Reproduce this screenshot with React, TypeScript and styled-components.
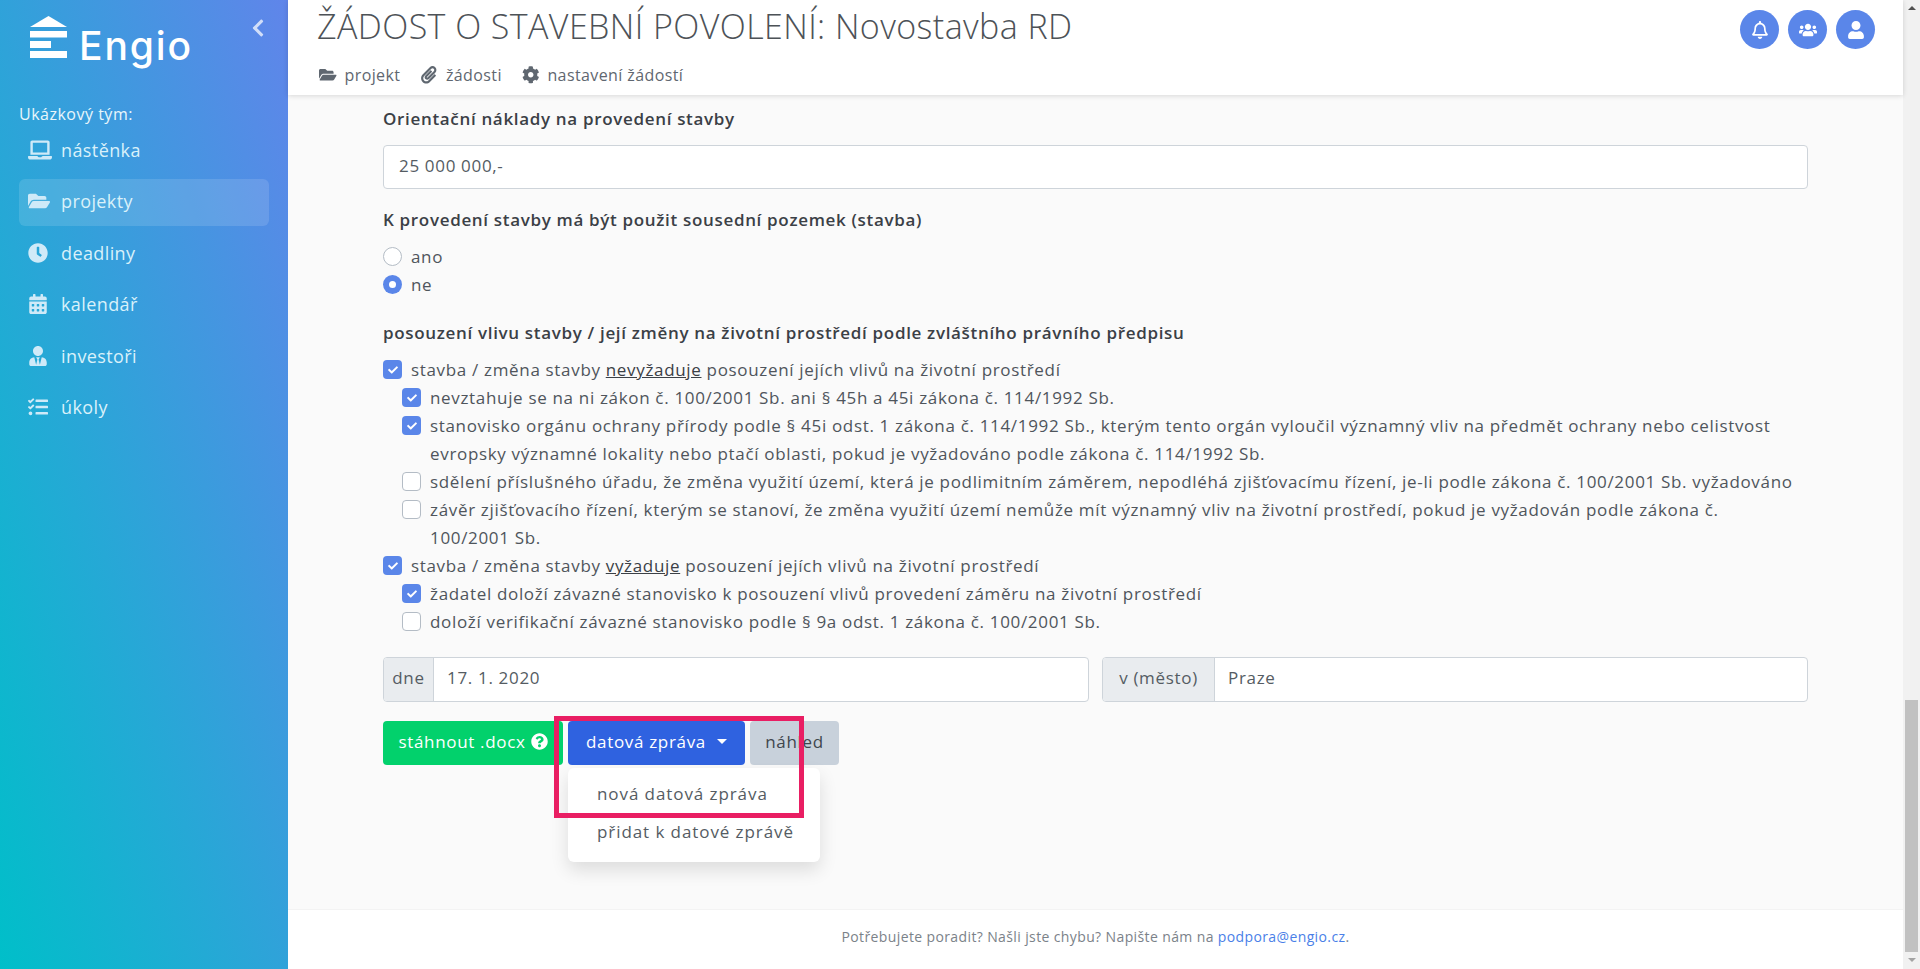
import React from "react";
import styled, { createGlobalStyle } from "styled-components";
import { FaLaptop, FaFolderOpen, FaClock, FaCalendarAlt, FaUserTie, FaTasks, FaPaperclip, FaCog, FaRegBell, FaUsers, FaUser, FaQuestionCircle, FaCheck, FaChevronLeft } from "react-icons/fa";

const Global = createGlobalStyle`
  html, body { margin: 0; padding: 0; height: 100%; overflow: hidden; }
  body { font-family: "Open Sans", "Lato", sans-serif; font-size: 17px; font-weight: 400; color: #4f555c; letter-spacing: 0.67px; }
  * { box-sizing: border-box; }
`;

const Page = styled.div`display: flex; width: 1920px; height: 969px; background: #fafafa;`;
const Sidebar = styled.aside`
  width: 288px; flex: none; padding: 16px 19px 0; color: #fff;
  background: linear-gradient(to top right, #00bfc9, #6085ea);
  display: flex; flex-direction: column;
`;
const Brand = styled.div`display: flex; align-items: flex-start; height: 88px; position: relative; padding-left: 11px;`;
const BrandName = styled.span`
  font-family: "Inter", sans-serif; font-size: 39px; font-weight: 500; letter-spacing: 1.9px; line-height: 46px; margin: 7px 0 0 12px;
`;
const Collapse = styled.span`position: absolute; left: 229px; top: 2px; color: rgba(255,255,255,.72); font-size: 20px; display: flex;`;
const TeamLabel = styled.div`height: 20px; line-height: 20px; font-size: 16px; color: #e8f6fb; margin-bottom: 4px; letter-spacing: .5px;`;
const NavItem = styled.div<{ $active?: boolean }>`
  height: 47px; margin-bottom: 4.4px; padding: 0 0 3px 9px; display: flex; align-items: center;
  border-radius: 6px; font-size: 18px; color: #d9f1fa; letter-spacing: .4px;
  background: ${p => (p.$active ? "rgba(255,255,255,.13)" : "transparent")};
`;
const NavIcon = styled.span<{ $size: number }>`width: 33px; flex: none; display: flex; font-size: ${p => p.$size}px; color: #cfeaf8;`;

const Right = styled.div`flex: 1; min-width: 0; display: flex; flex-direction: column;`;
const Header = styled.header`
  height: 95px; flex: none; background: #fff; box-shadow: 0 1px 5px rgba(0,0,0,.14); padding: 0 28px 0 29px;
  display: flex; justify-content: space-between; position: relative; z-index: 2;
`;
const Title = styled.h1`margin: 8px 0 0; font-size: 34px; line-height: 37px; font-weight: 300; color: #4d5257; letter-spacing: .42px; white-space: nowrap;`;
const Tabs = styled.nav`display: flex; gap: 20px; margin-top: 18px; padding-left: 2px;`;
const Tab = styled.span`
  display: flex; align-items: center; gap: 8px; height: 24px; color: #5f6770; font-size: 16px; letter-spacing: .4px;
  svg { font-size: 17.5px; }
`;
const Circles = styled.div`display: flex; gap: 9px; padding-top: 10px;`;
const Circle = styled.span`width: 39px; height: 39px; border-radius: 50%; background: #5a86e9; color: #fff; display: flex; align-items: center; justify-content: center; font-size: 18px;`;

const Main = styled.main`flex: 1; padding: 12px 95px 0; overflow: hidden;`;
const FieldLabel = styled.div<{ $top?: number }>`height: 24px; line-height: 24px; font-weight: 600; color: #3b4046; margin-top: ${p => p.$top ?? 0}px; white-space: nowrap;`;
const Input = styled.div`
  height: 44px; margin-top: 14px; background: #fff; border: 1px solid #ced4da; border-radius: 4px;
  padding: 0 15px 3px; display: flex; align-items: center; color: #555c63;
`;
const Group = styled.div<{ $top: number }>`margin-top: ${p => p.$top}px;`;
const Row = styled.div<{ $level?: number }>`
  display: flex; align-items: flex-start; gap: 9px; line-height: 28px; white-space: nowrap; padding-left: ${p => (p.$level ?? 0) * 19}px;
`;
const Box = styled.span<{ $on?: boolean; $round?: boolean }>`
  width: 19px; height: 19px; flex: none; margin-top: 4px; display: flex; align-items: center; justify-content: center;
  border-radius: ${p => (p.$round ? "50%" : "4px")}; color: #fff; font-size: 10px;
  background: ${p => (p.$on ? "#5a86e9" : "#fff")};
  border: ${p => (p.$on ? "none" : "1px solid #b4bcc5")};
`;
const Dot = styled.span`width: 7px; height: 7px; border-radius: 50%; background: #fff;`;
const Under = styled.u`color: #3b4046;`;
const Pair = styled.div`display: flex; gap: 13px; margin-top: 21px;`;
const InputGroup = styled.div`flex: 1; height: 45px; display: flex; border: 1px solid #ced4da; border-radius: 4px; overflow: hidden; background: #fff;`;
const Addon = styled.span<{ $w: number }>`
  width: ${p => p.$w}px; flex: none; background: #e9ecef; border-right: 1px solid #ced4da; padding-bottom: 4px;
  display: flex; align-items: center; justify-content: center; color: #555c63; white-space: nowrap;
`;
const GroupValue = styled.span`padding: 0 13px 4px; display: flex; align-items: center; color: #555c63;`;
const Actions = styled.div`display: flex; gap: 5px; margin-top: 19px; position: relative; width: 460px;`;
const Btn = styled.span<{ $bg: string; $fg: string; $w: number }>`
  width: ${p => p.$w}px; height: 44px; padding-bottom: 4px; border-radius: 4px; background: ${p => p.$bg}; color: ${p => p.$fg};
  display: flex; align-items: center; justify-content: center; gap: 5px; white-space: nowrap;
  svg { font-size: 17px; flex: none; }
`;
const Caret = styled.span`width: 0; height: 0; margin-left: 6px; border-left: 5px solid transparent; border-right: 5px solid transparent; border-top: 5px solid #fff;`;
const Menu = styled.div`
  position: absolute; left: 185px; top: 47px; width: 252px; height: 94px; background: #fff; border-radius: 6px;
  box-shadow: 0 8px 18px rgba(0,0,0,.12); padding: 7px 0; z-index: 3;
`;
const MenuItem = styled.div`height: 38px; line-height: 38px; padding-left: 29px; color: #555c63; white-space: nowrap; letter-spacing: .92px;`;
const Highlight = styled.div`position: absolute; left: 171px; top: -5px; width: 250px; height: 102px; border: 5px solid #e91e63; z-index: 4;`;
const Footer = styled.footer`
  height: 60px; flex: none; background: #fff; border-top: 1px solid #f3f3f3; display: flex; align-items: center; justify-content: center;
  font-size: 14px; color: #7b8289; letter-spacing: .38px; padding-bottom: 6px;
`;
const Link = styled.span`color: #4a7fe8; margin-left: 4px;`;
const Scroll = styled.div`width: 17px; flex: none; background: #f1f1f1; position: relative;`;
const Thumb = styled.div`position: absolute; left: 2px; width: 13px; top: 700px; height: 252px; background: #c1c1c1;`;
const ArrowUp = styled.div`position: absolute; left: 5px; top: 6px; border-left: 4px solid transparent; border-right: 4px solid transparent; border-bottom: 4px solid #505050;`;
const ArrowDown = styled.div`position: absolute; left: 5px; top: 958px; border-left: 4px solid transparent; border-right: 4px solid transparent; border-top: 4px solid #a3a3a3;`;

const Logo = () => (
  <svg width="37" height="42" viewBox="0 0 37 42" fill="#fff">
    <polygon points="18.5,0 37,11 0,11" />
    <rect x="0" y="15" width="37" height="6.5" />
    <rect x="0" y="25" width="21" height="7" />
    <rect x="0" y="35" width="37" height="7" />
  </svg>
);

const Check = ({ on }: { on?: boolean }) => <Box $on={on}>{on && <FaCheck />}</Box>;

const nav = [
  { t: "nástěnka", i: <FaLaptop />, s: 24 },
  { t: "projekty", i: <FaFolderOpen />, s: 22, a: true },
  { t: "deadliny", i: <FaClock />, s: 20 },
  { t: "kalendář", i: <FaCalendarAlt />, s: 20 },
  { t: "investoři", i: <FaUserTie />, s: 20 },
  { t: "úkoly", i: <FaTasks />, s: 20 },
];

export default function App() {
  return (
    <Page>
      <Global />
      <Sidebar>
        <Brand>
          <Logo />
          <BrandName>Engio</BrandName>
          <Collapse><FaChevronLeft /></Collapse>
        </Brand>
        <TeamLabel>Ukázkový tým:</TeamLabel>
        {nav.map(n => (
          <NavItem key={n.t} $active={n.a}>
            <NavIcon $size={n.s}>{n.i}</NavIcon>
            {n.t}
          </NavItem>
        ))}
      </Sidebar>
      <Right>
        <Header>
          <div>
            <Title>ŽÁDOST O STAVEBNÍ POVOLENÍ: Novostavba RD</Title>
            <Tabs>
              <Tab><FaFolderOpen />projekt</Tab>
              <Tab><FaPaperclip />žádosti</Tab>
              <Tab><FaCog />nastavení žádostí</Tab>
            </Tabs>
          </div>
          <Circles>
            <Circle><FaRegBell /></Circle>
            <Circle><FaUsers /></Circle>
            <Circle><FaUser /></Circle>
          </Circles>
        </Header>
        <Main>
          <FieldLabel>Orientační náklady na provedení stavby</FieldLabel>
          <Input>25 000 000,-</Input>
          <FieldLabel $top={19}>K provedení stavby má být použit sousední pozemek (stavba)</FieldLabel>
          <Group $top={11}>
            <Row><Box $round />ano</Row>
            <Row><Box $round $on><Dot /></Box>ne</Row>
          </Group>
          <FieldLabel $top={22}>posouzení vlivu stavby / její změny na životní prostředí podle zvláštního právního předpisu</FieldLabel>
          <Group $top={11}>
            <Row><Check on /><span>stavba / změna stavby <Under>nevyžaduje</Under> posouzení jejích vlivů na životní prostředí</span></Row>
            <Row $level={1}><Check on /><span>nevztahuje se na ni zákon č. 100/2001 Sb. ani § 45h a 45i zákona č. 114/1992 Sb.</span></Row>
            <Row $level={1}><Check on /><span>stanovisko orgánu ochrany přírody podle § 45i odst. 1 zákona č. 114/1992 Sb., kterým tento orgán vyloučil významný vliv na předmět ochrany nebo celistvost<br />evropsky významné lokality nebo ptačí oblasti, pokud je vyžadováno podle zákona č. 114/1992 Sb.</span></Row>
            <Row $level={1}><Check /><span>sdělení příslušného úřadu, že změna využití území, která je podlimitním záměrem, nepodléhá zjišťovacímu řízení, je-li podle zákona č. 100/2001 Sb. vyžadováno</span></Row>
            <Row $level={1}><Check /><span>závěr zjišťovacího řízení, kterým se stanoví, že změna využití území nemůže mít významný vliv na životní prostředí, pokud je vyžadován podle zákona č.<br />100/2001 Sb.</span></Row>
            <Row><Check on /><span>stavba / změna stavby <Under>vyžaduje</Under> posouzení jejích vlivů na životní prostředí</span></Row>
            <Row $level={1}><Check on /><span>žadatel doloží závazné stanovisko k posouzení vlivů provedení záměru na životní prostředí</span></Row>
            <Row $level={1}><Check /><span>doloží verifikační závazné stanovisko podle § 9a odst. 1 zákona č. 100/2001 Sb.</span></Row>
          </Group>
          <Pair>
            <InputGroup><Addon $w={50}>dne</Addon><GroupValue>17. 1. 2020</GroupValue></InputGroup>
            <InputGroup><Addon $w={112}>v (město)</Addon><GroupValue>Praze</GroupValue></InputGroup>
          </Pair>
          <Actions>
            <Btn $bg="#02d16c" $fg="#fff" $w={180}>stáhnout .docx <FaQuestionCircle /></Btn>
            <Btn $bg="#2f62e0" $fg="#fff" $w={177}>datová zpráva <Caret /></Btn>
            <Btn $bg="#c8d1db" $fg="#3f464d" $w={89}>náhled</Btn>
            <Menu>
              <MenuItem>nová datová zpráva</MenuItem>
              <MenuItem>přidat k datové zprávě</MenuItem>
            </Menu>
            <Highlight />
          </Actions>
        </Main>
        <Footer>Potřebujete poradit? Našli jste chybu? Napište nám na <Link>podpora@engio.cz</Link>.</Footer>
      </Right>
      <Scroll><ArrowUp /><Thumb /><ArrowDown /></Scroll>
    </Page>
  );
}
